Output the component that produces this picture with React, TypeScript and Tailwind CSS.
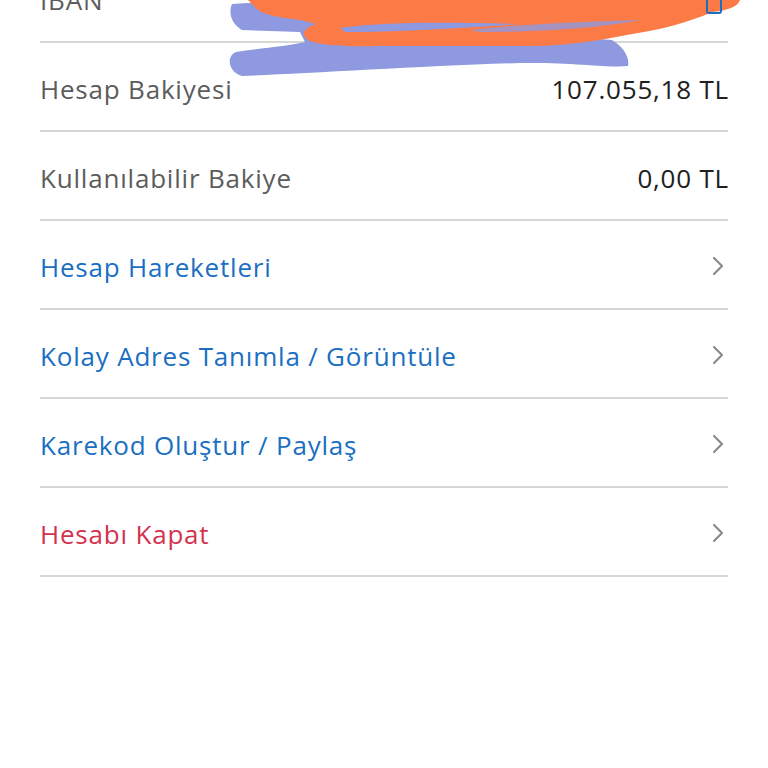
import { ChevronRight } from 'lucide-react';

type Row =
  | { kind: 'info'; label: string; value?: string }
  | { kind: 'link'; label: string; tone: 'blue' | 'red' };

const rows: Row[] = [
  { kind: 'info', label: 'IBAN' },
  { kind: 'info', label: 'Hesap Bakiyesi', value: '107.055,18 TL' },
  { kind: 'info', label: 'Kullanılabilir Bakiye', value: '0,00 TL' },
  { kind: 'link', label: 'Hesap Hareketleri', tone: 'blue' },
  { kind: 'link', label: 'Kolay Adres Tanımla / Görüntüle', tone: 'blue' },
  { kind: 'link', label: 'Karekod Oluştur / Paylaş', tone: 'blue' },
  { kind: 'link', label: 'Hesabı Kapat', tone: 'red' },
];

function Scribble() {
  // redaction marks drawn over the IBAN value
  return (
    <svg className="absolute left-0 top-0 pointer-events-none" width="768" height="90" viewBox="0 0 768 90">
      <path
        d="M232 4 C228 14 232 24 242 30 L300 32 L305 42 C290 46 260 48 236 52 C226 56 228 72 242 76 C300 74 420 66 520 63 C570 62 610 68 628 66 C630 56 622 46 612 40 L560 36 L420 30 L320 22 L300 0 Z"
        fill="#8e99e0"
      />
      <path
        d="M248 0 L740 0 C738 6 730 10 712 12 C690 22 660 30 632 34 C600 40 570 46 530 46 L380 46 C340 47 318 45 308 40 C300 34 304 28 316 24 L300 20 C285 18 266 16 258 10 Z"
        fill="#fb7a45"
      />
      <path d="M340 28 C380 22 440 22 520 24 C460 28 400 32 345 32 Z" fill="#8e99e0" />
      <path d="M470 30 C520 24 580 22 640 20 C600 28 540 32 480 32 Z" fill="#8e99e0" opacity="0.8" />
    </svg>
  );
}

export default function App() {
  return (
    <div className="relative w-[768px] h-[768px] overflow-hidden bg-white font-['Open_Sans','Noto_Sans',sans-serif]">
      <div className="-mt-[46px] px-10">
        {rows.map((row, i) => (
          <div key={i} className="h-[89px] flex items-center justify-between border-b-2 border-[#d6d6d6]">
            <span
              className={`mt-[5px] text-[26px] tracking-[0.8px] ${
                row.kind === 'info'
                  ? 'text-[#5c5c5c]'
                  : row.tone === 'blue'
                  ? 'text-[#1a6fc2]'
                  : 'text-[#d3324f]'
              }`}
            >
              {row.label}
            </span>
            {row.kind === 'info' && row.value && (
              <span className="mt-[5px] -mr-[1px] text-[26px] tracking-[0.8px] text-[#202020]">{row.value}</span>
            )}
            {row.kind === 'info' && !row.value && (
              <span className="relative z-10 block shrink-0 w-[16px] h-[16px] mr-[6px] mt-[16px] border-2 border-[#1a6fc2] rounded-[3px]" />
            )}
            {row.kind === 'link' && (
              <ChevronRight className="w-[32px] h-[32px] mt-[3px] -mr-[6px] text-[#8a8a8a]" strokeWidth={1.6} />
            )}
          </div>
        ))}
      </div>
      <Scribble />
    </div>
  );
}
